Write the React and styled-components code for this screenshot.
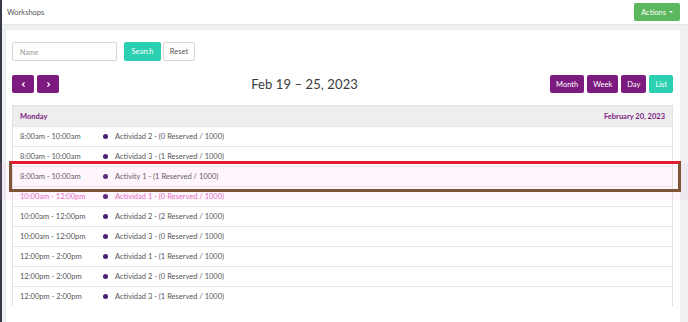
import React from "react";
import styled, { createGlobalStyle } from "styled-components";

const GlobalStyle = createGlobalStyle`
  html, body {
    margin: 0;
    padding: 0;
    background: #eef0f2;
    font-family: "Lato", "Open Sans", sans-serif;
  }
`;

const Page = styled.div`
  position: relative;
  display: flex;
  height: 322px;
  overflow: hidden;
  background: #eef0f2;
`;

const LeftEdge = styled.div`
  width: 2px;
  background: #353a44;
`;

const Main = styled.div`
  flex: 1;
  display: flex;
  flex-direction: column;
`;

const TopBar = styled.div`
  height: 24px;
  background: #fff;
  display: flex;
  align-items: center;
  justify-content: space-between;
  padding: 0 8px 0 5px;
  border-bottom: 1px solid #e8e8e8;
`;

const PageTitle = styled.span`
  font-size: 7.5px;
  color: #555;
`;

const ActionsButton = styled.button`
  height: 18px;
  padding: 0 7px;
  border: none;
  border-radius: 2px;
  background: #5cb85c;
  color: #fff;
  font-family: inherit;
  font-size: 7.5px;
  display: flex;
  align-items: center;
  gap: 3px;
`;

const Caret = styled.span`
  width: 0;
  height: 0;
  border-left: 2px solid transparent;
  border-right: 2px solid transparent;
  border-top: 2px solid #fff;
`;

const Card = styled.div`
  flex: 1;
  margin: 5px 8px 0 3px;
  background: #fff;
  padding: 12px 7px 0 6px;
  border-left: 1px solid #e9e9e9;
`;

const SearchRow = styled.div`
  display: flex;
  align-items: center;
`;

const NameInput = styled.input`
  box-sizing: border-box;
  width: 105px;
  height: 19px;
  border: 1px solid #d6d6d6;
  border-radius: 2px;
  padding: 0 7px;
  font-family: inherit;
  font-size: 7px;
  outline: none;
  &::placeholder {
    color: #999;
  }
`;

const Button = styled.button`
  box-sizing: border-box;
  height: ${(p) => p.$h || 19}px;
  min-width: ${(p) => p.$w || 0}px;
  padding: 0 5px;
  margin-left: ${(p) => p.$ml || 0}px;
  border: 1px solid ${(p) => (p.$variant === "plain" ? "#d6d6d6" : "transparent")};
  border-radius: 2px;
  background: ${(p) =>
    p.$variant === "teal" ? "#2bd0b3" : p.$variant === "purple" ? "#7c1a7f" : "#fff"};
  color: ${(p) => (p.$variant === "plain" ? "#555" : "#fff")};
  font-family: inherit;
  font-size: 7.5px;
  display: flex;
  align-items: center;
  justify-content: center;
`;

const CalToolbar = styled.div`
  display: flex;
  align-items: center;
  justify-content: space-between;
  margin-top: 14px;
`;

const Group = styled.div`
  display: flex;
  gap: 3px;
`;

const CalTitle = styled.h2`
  margin: 0;
  font-size: 13px;
  font-weight: 400;
  color: #3a3a3a;
  letter-spacing: 0.1px;
`;

const List = styled.div`
  margin-top: 12px;
  border: 1px solid #e2e2e2;
  border-bottom: none;
`;

const DayHeader = styled.div`
  height: 20px;
  background: #eeeeee;
  display: flex;
  align-items: center;
  justify-content: space-between;
  padding: 0 7px;
  font-size: 7.5px;
  font-weight: 700;
  color: #7c1a7f;
`;

const Row = styled.div`
  height: 19px;
  border-top: 1px solid #e6e6e6;
  display: flex;
  align-items: center;
  padding-left: 7px;
  font-size: 7.5px;
  color: ${(p) => (p.$pink ? "#e46bbf" : "#555")};
`;

const Time = styled.span`
  width: 83px;
`;

const Dot = styled.span`
  width: 5px;
  height: 5px;
  border-radius: 50%;
  background: #4d1f74;
  margin-right: 7px;
`;

const PinkBand = styled.div`
  position: absolute;
  left: 0;
  right: 0;
  top: 163px;
  height: 37px;
  background: rgba(245, 150, 220, 0.09);
  pointer-events: none;
`;

const Marker = styled.div`
  position: absolute;
  left: 9px;
  top: 161px;
  width: 672px;
  height: 31px;
  box-sizing: border-box;
  border: 3px solid #7d5534;
  border-top-color: #e41b2b;
  pointer-events: none;
`;

const events = [
  ["8:00am - 10:00am", "Actividad 2 - (0 Reserved / 1000)"],
  ["8:00am - 10:00am", "Actividad 3 - (1 Reserved / 1000)"],
  ["8:00am - 10:00am", "Activity 1 - (1 Reserved / 1000)"],
  ["10:00am - 12:00pm", "Actividad 1 - (0 Reserved / 1000)", true],
  ["10:00am - 12:00pm", "Actividad 2 - (2 Reserved / 1000)"],
  ["10:00am - 12:00pm", "Actividad 3 - (0 Reserved / 1000)"],
  ["12:00pm - 2:00pm", "Actividad 1 - (1 Reserved / 1000)"],
  ["12:00pm - 2:00pm", "Actividad 2 - (0 Reserved / 1000)"],
  ["12:00pm - 2:00pm", "Actividad 3 - (1 Reserved / 1000)"],
];

function App() {
  return (
    <Page>
      <GlobalStyle />
      <LeftEdge />
      <Main>
        <TopBar>
          <PageTitle>Workshops</PageTitle>
          <ActionsButton>
            Actions <Caret />
          </ActionsButton>
        </TopBar>
        <Card>
          <SearchRow>
            <NameInput placeholder="Name" />
            <Button $variant="teal" $w={37} $ml={7}>
              Search
            </Button>
            <Button $variant="plain" $w={32} $ml={2}>
              Reset
            </Button>
          </SearchRow>
          <CalToolbar>
            <Group>
              <Button $variant="purple" $w={22} $h={18}>
                <svg width="7" height="7" viewBox="0 0 8 8">
                  <path d="M5.2 1.5 2.8 4l2.4 2.5" fill="none" stroke="#fff" strokeWidth="1.4" />
                </svg>
              </Button>
              <Button $variant="purple" $w={22} $h={18}>
                <svg width="7" height="7" viewBox="0 0 8 8">
                  <path d="M2.8 1.5 5.2 4 2.8 6.5" fill="none" stroke="#fff" strokeWidth="1.4" />
                </svg>
              </Button>
            </Group>
            <CalTitle>Feb 19 – 25, 2023</CalTitle>
            <Group>
              <Button $variant="purple" $w={32} $h={18}>Month</Button>
              <Button $variant="purple" $w={31} $h={18}>Week</Button>
              <Button $variant="purple" $w={23} $h={18}>Day</Button>
              <Button $variant="teal" $w={21} $h={18}>List</Button>
            </Group>
          </CalToolbar>
          <List>
            <DayHeader>
              <span>Monday</span>
              <span>February 20, 2023</span>
            </DayHeader>
            {events.map(([time, title, pink], i) => (
              <Row key={i} $pink={pink}>
                <Time>{time}</Time>
                <Dot />
                <span>{title}</span>
              </Row>
            ))}
          </List>
        </Card>
      </Main>
      <PinkBand />
      <Marker />
    </Page>
  );
}

export default App;
